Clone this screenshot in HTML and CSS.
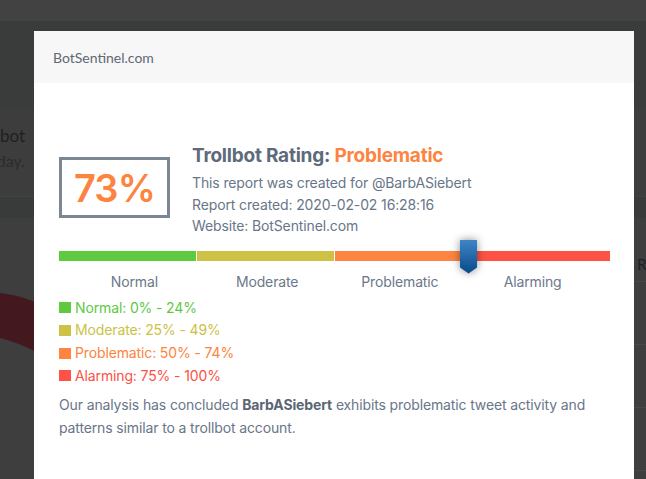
FILE: index.html
```html
<!DOCTYPE html>
<html lang="en">
<head>
<meta charset="utf-8">
<title>BotSentinel report</title>
<link rel="stylesheet" href="styles.css">
</head>
<body>
<div class="page">
  <div class="bg-top"></div>
  <div class="bg-nav"></div>
  <div class="bg-intro">
    <div class="bg-left">
      <span class="bg-l1">bot</span>
      <span class="bg-l2">day.</span>
    </div>
  </div>
  <div class="bg-band"></div>
  <div class="bg-main">
    <div class="bg-chart">
      <svg width="34" height="140" viewBox="0 0 34 140">
        <path d="M0 75 Q20 77 40 86 L40 136 Q20 125 0 120 Z" fill="#43191f"/>
      </svg>
    </div>
    <div class="bg-table">
      <div class="bg-head"><span>Report</span></div>
      <div class="bg-row"></div>
      <div class="bg-row"></div>
      <div class="bg-row"></div>
    </div>
  </div>
</div>

<div class="modal">
  <div class="modal-header">BotSentinel.com</div>
  <div class="modal-body">
    <div class="summary">
      <div class="score">73%</div>
      <div class="info">
        <h2 class="title">Trollbot Rating: <span class="c-problematic">Problematic</span></h2>
        <p class="line first">This report was created for @BarbASiebert</p>
        <p class="line">Report created: 2020-02-02 16:28:16</p>
        <p class="line">Website: BotSentinel.com</p>
      </div>
    </div>

    <div class="meter">
      <div class="bar">
        <div class="seg seg-normal"></div>
        <div class="seg seg-moderate"></div>
        <div class="seg seg-problematic"></div>
        <div class="seg seg-alarming"></div>
      </div>
      <svg class="marker" width="17" height="34" viewBox="0 0 17 34">
        <defs>
          <linearGradient id="mg" x1="0" y1="0" x2="0" y2="1">
            <stop offset="0" stop-color="#3f85c6"/>
            <stop offset="1" stop-color="#084a8c"/>
          </linearGradient>
        </defs>
        <path d="M0 0 H17 V27.5 L8.5 33.5 L0 27.5 Z" fill="url(#mg)"/>
      </svg>
    </div>

    <div class="labels">
      <span>Normal</span>
      <span>Moderate</span>
      <span>Problematic</span>
      <span>Alarming</span>
    </div>

    <ul class="legend">
      <li class="c-normal"><i class="sq bg-normal"></i>Normal: 0% - 24%</li>
      <li class="c-moderate"><i class="sq bg-moderate"></i>Moderate: 25% - 49%</li>
      <li class="c-problematic"><i class="sq bg-problematic"></i>Problematic: 50% - 74%</li>
      <li class="c-alarming"><i class="sq bg-alarming"></i>Alarming: 75% - 100%</li>
    </ul>

    <p class="conclusion">Our analysis has concluded <b>BarbASiebert</b> exhibits problematic tweet activity and patterns similar to a trollbot account.</p>
  </div>
</div>
</body>
</html>
```

FILE: styles.css
```css
html, body {
  margin: 0;
  padding: 0;
}
body {
  width: 646px;
  height: 479px;
  overflow: hidden;
  position: relative;
  background: #3e3e3e;
  font-family: "Inter", "Liberation Sans", sans-serif;
}

/* background page (dimmed) */
.page {
  display: flex;
  flex-direction: column;
}
.bg-top { height: 21px; background: #424242; }
.bg-nav { height: 87px; background: #3a3b3b; }
.bg-intro {
  height: 88px;
  background: #3d3d3d;
  font-family: "Lato", sans-serif;
  font-size: 17px;
}
.bg-left {
  width: 25px;
  display: flex;
  flex-direction: column;
  align-items: flex-end;
  padding-top: 15px;
}
.bg-l1 { color: #1f1f1f; line-height: 26px; white-space: nowrap; }
.bg-l2 { color: #2c2c2c; line-height: 24px; white-space: nowrap; font-size: 16px; }
.bg-band { height: 21px; background: #393a3a; border-top: 1px solid #424242; }
.bg-main {
  display: flex;
  justify-content: space-between;
  height: 300px;
  background: #3e3e3e;
}
.bg-chart { width: 34px; overflow: hidden; }
.bg-chart svg { display: block; }
.bg-table { width: 12px; display: flex; flex-direction: column; }
.bg-head {
  height: 64px;
  border-bottom: 1px solid #484848;
  display: flex;
  align-items: flex-end;
  padding-bottom: 8px;
  box-sizing: border-box;
  white-space: nowrap;
  font-family: "Lato", sans-serif;
  font-size: 16px;
  color: #222;
  padding-left: 3px;
}
.bg-row { height: 63px; border-bottom: 1px solid #484848; box-sizing: border-box; }

/* modal */
.modal {
  position: absolute;
  left: 34px;
  top: 31px;
  width: 600px;
  height: 470px;
  background: #fff;
}
.modal-header {
  height: 52px;
  background: #f7f7f7;
  display: flex;
  align-items: center;
  padding-left: 19px;
  font-family: "Lato", sans-serif;
  font-size: 14px;
  color: #606874;
}
.modal-body {
  padding: 61px 24px 0 25px;
  color: #687689;
  font-size: 14px;
  letter-spacing: -0.13px;
}

.summary {
  display: flex;
  align-items: center;
  gap: 22px;
}
.score {
  width: 111px;
  height: 61px;
  box-sizing: border-box;
  border: 3px solid #7b8793;
  display: flex;
  align-items: center;
  justify-content: center;
  font-size: 38px;
  font-weight: 600;
  color: #fd8340;
  letter-spacing: -0.8px;
  margin-top: -5px;
}
.info { display: flex; flex-direction: column; }
.title {
  margin: 0;
  font-size: 19px;
  line-height: 24px;
  font-weight: 700;
  color: #5d6a7b;
  letter-spacing: -0.22px;
}
.line {
  margin: 0;
  line-height: 21.5px;
}
.line.first { margin-top: 4px; }

.meter {
  position: relative;
  margin-top: 14px;
}
.bar {
  display: flex;
  gap: 1px;
  height: 10px;
}
.seg { flex: 1; }
.seg-normal { background: #5fc940; }
.seg-moderate { background: #cdc146; }
.seg-problematic { background: #fd8540; }
.seg-alarming { background: #fe5247; }
.marker {
  position: absolute;
  left: 401px;
  top: -11px;
  filter: drop-shadow(0 0 4px rgba(0,0,0,0.45));
}

.labels {
  display: grid;
  grid-template-columns: repeat(4, 1fr);
  padding: 0 11px 0 9px;
  margin-top: 10px;
  line-height: 21px;
  text-align: center;
  color: #6b788a;
}

.legend {
  list-style: none;
  margin: 5px 0 0;
  padding: 0;
}
.legend li {
  display: flex;
  align-items: center;
  gap: 4px;
  line-height: 22.7px;
}
.sq {
  display: block;
  width: 12px;
  height: 11px;
}
.bg-normal { background: #5fc940; }
.bg-moderate { background: #cdc146; }
.bg-problematic { background: #fd8540; }
.bg-alarming { background: #fe5247; }
.c-normal { color: #5ec843; }
.c-moderate { color: #cbc246; }
.c-problematic { color: #fd8340; }
.c-alarming { color: #fd5046; }

.conclusion {
  margin: 6px 0 0;
  line-height: 23px;
  color: #687689;
}
.conclusion b { color: #5a6675; font-weight: 700; }
```
